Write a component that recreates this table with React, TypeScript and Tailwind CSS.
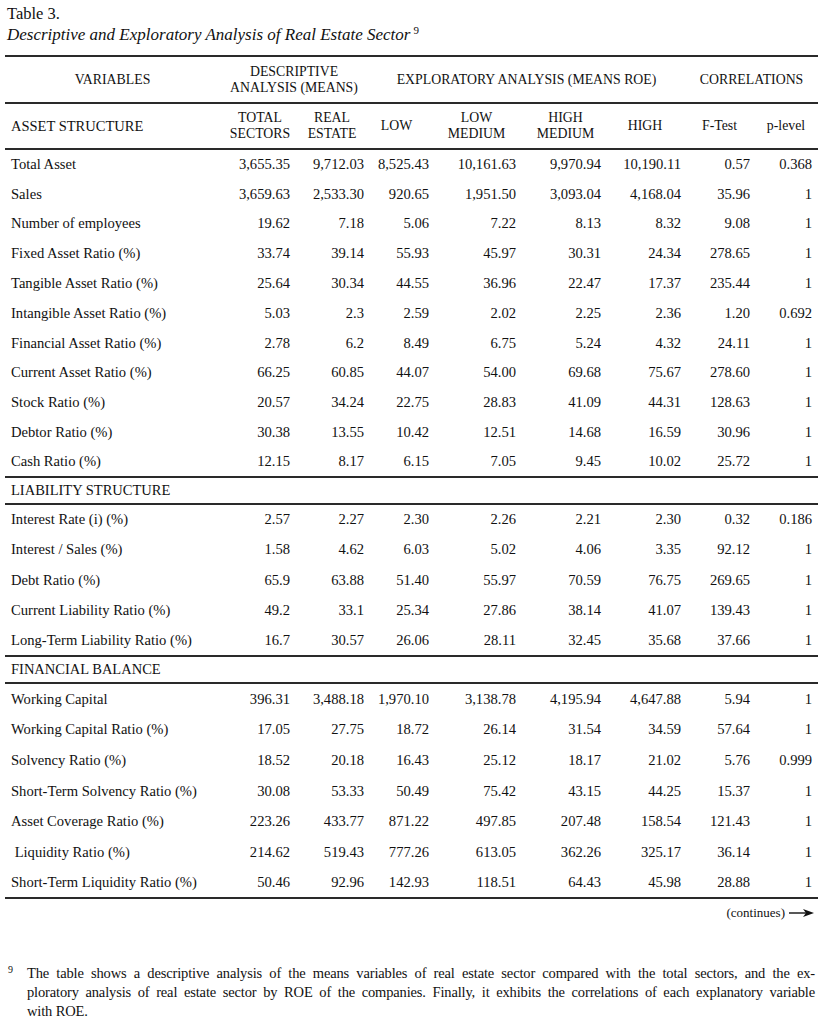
const asset: string[][] = [
  ["Total Asset", "3,655.35", "9,712.03", "8,525.43", "10,161.63", "9,970.94", "10,190.11", "0.57", "0.368"],
  ["Sales", "3,659.63", "2,533.30", "920.65", "1,951.50", "3,093.04", "4,168.04", "35.96", "1"],
  ["Number of employees", "19.62", "7.18", "5.06", "7.22", "8.13", "8.32", "9.08", "1"],
  ["Fixed Asset Ratio (%)", "33.74", "39.14", "55.93", "45.97", "30.31", "24.34", "278.65", "1"],
  ["Tangible Asset Ratio (%)", "25.64", "30.34", "44.55", "36.96", "22.47", "17.37", "235.44", "1"],
  ["Intangible Asset Ratio (%)", "5.03", "2.3", "2.59", "2.02", "2.25", "2.36", "1.20", "0.692"],
  ["Financial Asset Ratio (%)", "2.78", "6.2", "8.49", "6.75", "5.24", "4.32", "24.11", "1"],
  ["Current Asset Ratio (%)", "66.25", "60.85", "44.07", "54.00", "69.68", "75.67", "278.60", "1"],
  ["Stock Ratio (%)", "20.57", "34.24", "22.75", "28.83", "41.09", "44.31", "128.63", "1"],
  ["Debtor Ratio (%)", "30.38", "13.55", "10.42", "12.51", "14.68", "16.59", "30.96", "1"],
  ["Cash Ratio (%)", "12.15", "8.17", "6.15", "7.05", "9.45", "10.02", "25.72", "1"],
];

const liability: string[][] = [
  ["Interest Rate (i) (%)", "2.57", "2.27", "2.30", "2.26", "2.21", "2.30", "0.32", "0.186"],
  ["Interest / Sales (%)", "1.58", "4.62", "6.03", "5.02", "4.06", "3.35", "92.12", "1"],
  ["Debt Ratio (%)", "65.9", "63.88", "51.40", "55.97", "70.59", "76.75", "269.65", "1"],
  ["Current Liability Ratio (%)", "49.2", "33.1", "25.34", "27.86", "38.14", "41.07", "139.43", "1"],
  ["Long-Term Liability Ratio (%)", "16.7", "30.57", "26.06", "28.11", "32.45", "35.68", "37.66", "1"],
];

const financial: string[][] = [
  ["Working Capital", "396.31", "3,488.18", "1,970.10", "3,138.78", "4,195.94", "4,647.88", "5.94", "1"],
  ["Working Capital Ratio (%)", "17.05", "27.75", "18.72", "26.14", "31.54", "34.59", "57.64", "1"],
  ["Solvency Ratio (%)", "18.52", "20.18", "16.43", "25.12", "18.17", "21.02", "5.76", "0.999"],
  ["Short-Term Solvency Ratio (%)", "30.08", "53.33", "50.49", "75.42", "43.15", "44.25", "15.37", "1"],
  ["Asset Coverage Ratio (%)", "223.26", "433.77", "871.22", "497.85", "207.48", "158.54", "121.43", "1"],
  ["\u00a0Liquidity Ratio (%)", "214.62", "519.43", "777.26", "613.05", "362.26", "325.17", "36.14", "1"],
  ["Short-Term Liquidity Ratio (%)", "50.46", "92.96", "142.93", "118.51", "64.43", "45.98", "28.88", "1"],
];

const Rows = ({ data, h }: { data: string[][]; h: string }) => (
  <>
    {data.map((r, i) => (
      <tr key={i} className={h}>
        <td className="pl-[6px] text-left whitespace-nowrap">{r[0]}</td>
        {r.slice(1).map((v, j) => (
          <td key={j} className={`text-right whitespace-nowrap ${j === 7 ? "pr-[6px]" : "pr-[4px]"}`}>
            {v}
          </td>
        ))}
      </tr>
    ))}
  </>
);

export default function App() {
  return (
    <div className="w-[820px] min-h-[1021px] bg-white text-[#111] font-['Liberation_Serif','Times_New_Roman',serif]">
      <div className="pl-[7px] pt-[4px]">
        <div className="text-[16.5px] leading-[20px]">Table 3.</div>
        <div className="text-[17px] leading-[22px] italic">
          Descriptive and Exploratory Analysis of Real Estate Sector
          <sup className="text-[11px] not-italic ml-[3px] relative top-[-6px]">9</sup>
        </div>
      </div>

      <table className="ml-[5px] mt-[9px] w-[813px] table-fixed border-collapse text-[14.6px]">
        <colgroup>
          <col className="w-[215px]" />
          <col className="w-[74px]" />
          <col className="w-[74px]" />
          <col className="w-[65px]" />
          <col className="w-[87px]" />
          <col className="w-[85px]" />
          <col className="w-[80px]" />
          <col className="w-[69px]" />
          <col className="w-[64px]" />
        </colgroup>
        <thead className="text-[13.8px] leading-[16px]">
          <tr className="h-[47px] border-t-2 border-b-2 border-[#2a2a2a]">
            <th className="font-normal text-center">VARIABLES</th>
            <th colSpan={2} className="font-normal text-center">
              DESCRIPTIVE
              <br />
              ANALYSIS (MEANS)
            </th>
            <th colSpan={4} className="font-normal text-center">
              EXPLORATORY ANALYSIS (MEANS ROE)
            </th>
            <th colSpan={2} className="font-normal text-center">CORRELATIONS</th>
          </tr>
          <tr className="h-[46px] border-b-2 border-[#2a2a2a]">
            <th className="font-normal text-left pl-[6px] text-[14.5px]">ASSET STRUCTURE</th>
            <th className="font-normal text-center pl-[6px]">
              TOTAL
              <br />
              SECTORS
            </th>
            <th className="font-normal text-center pl-[2px]">
              REAL
              <br />
              ESTATE
            </th>
            <th className="font-normal text-center pr-[8px]">LOW</th>
            <th className="font-normal text-center">
              LOW
              <br />
              MEDIUM
            </th>
            <th className="font-normal text-center pl-[6px]">
              HIGH
              <br />
              MEDIUM
            </th>
            <th className="font-normal text-center">HIGH</th>
            <th className="font-normal text-center">F-Test</th>
            <th className="font-normal text-center">p-level</th>
          </tr>
        </thead>
        <tbody className="leading-[18px]">
          <Rows data={asset} h="h-[29.8px]" />
          <tr className="h-[27px] border-t-2 border-b-2 border-[#2a2a2a]">
            <td colSpan={9} className="pl-[6px] text-[14.5px]">LIABILITY STRUCTURE</td>
          </tr>
          <Rows data={liability} h="h-[30.4px]" />
          <tr className="h-[27px] border-t-2 border-b-2 border-[#2a2a2a]">
            <td colSpan={9} className="pl-[6px] text-[14.5px]">FINANCIAL BALANCE</td>
          </tr>
          <Rows data={financial} h="h-[30.8px]" />
          <tr className="border-t-2 border-[#2a2a2a]">
            <td colSpan={9} className="p-0"></td>
          </tr>
        </tbody>
      </table>

      <div className="flex justify-end items-center pr-[5px] mt-[5px] text-[13px] leading-[18px]">
        <span>(continues)</span>
        <svg width="26" height="10" viewBox="0 0 26 10" className="ml-[4px]">
          <line x1="0" y1="5" x2="18" y2="5" stroke="#111" strokeWidth="1.4" />
          <path d="M14 1 L25 5 L14 9 L17 5 Z" fill="#111" />
        </svg>
      </div>

      <div className="mt-[42px] flex text-[14.5px] tracking-[-0.15px] leading-[19px]">
        <div className="w-[27px] pl-[8px] text-[10px] leading-[12px]">9</div>
        <div className="w-[788px]">
          <div className="text-justify [text-align-last:justify] whitespace-nowrap">
            The table shows a descriptive analysis of the means variables of real estate sector compared with the total sectors, and the ex-
          </div>
          <div className="text-justify [text-align-last:justify] whitespace-nowrap">
            ploratory analysis of real estate sector by ROE of the companies. Finally, it exhibits the correlations of each explanatory variable
          </div>
          <div>with ROE.</div>
        </div>
      </div>
    </div>
  );
}
